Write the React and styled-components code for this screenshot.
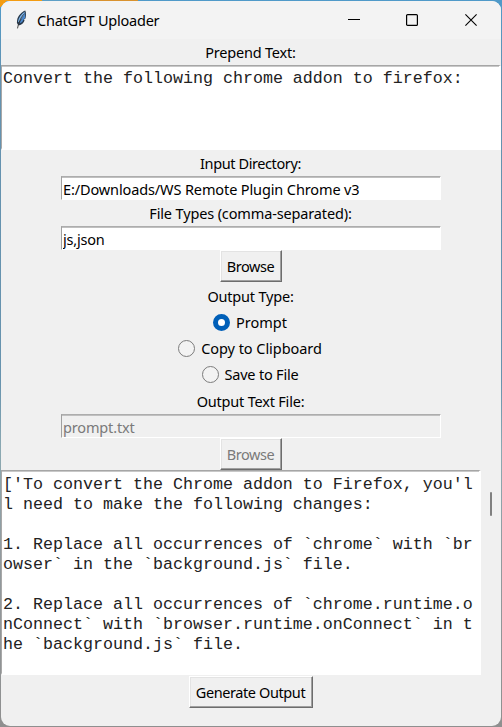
import React from "react";
import styled, { createGlobalStyle } from "styled-components";

const GlobalStyle = createGlobalStyle`
  * { box-sizing: border-box; }
  html, body { margin: 0; padding: 0; overflow: hidden; }
  button, input { font: inherit; margin: 0; }
`;

const Desktop = styled.div`
  width: 502px;
  height: 727px;
  padding: 1px;
  background:
    linear-gradient(90deg, #f39c12 0 42px, #5d9fc6 42px 90px, #d9922e 90px 138px, transparent 138px) 0 0 / 100% 1px no-repeat,
    linear-gradient(135deg, #f39c12 0 5px, transparent 5px) 0 0 / 8px 8px no-repeat,
    linear-gradient(180deg, #4f9ac9 0, #6492b0 80px, #6793ae 380px, #8ba9b2 450px, #929a9e 560px, #8f8f8f 727px);
`;

const Window = styled.main`
  display: flex;
  flex-direction: column;
  width: 500px;
  height: 725px;
  border-radius: 9px;
  overflow: hidden;
  background: #f0f0f0;
  color: #000;
  font: 14.5px/20px "Noto Sans", "Open Sans", sans-serif;
`;

const TitleBar = styled.header`
  display: flex;
  align-items: center;
  height: 38px;
  flex: none;
  padding: 0 1px 0 13px;
  background: #f3f3f3;
`;

const Title = styled.h1`
  flex: 1;
  margin: 0 0 0 7px;
  font-size: 14.5px;
  font-weight: 400;
  letter-spacing: ${(p) => p.$track}px;
  white-space: nowrap;
`;

const CaptionButton = styled.button`
  display: grid;
  place-items: center;
  width: 58.5px;
  height: 38px;
  padding: 0;
  border: 0;
  background: none;
`;

const Body = styled.div`
  display: flex;
  flex-direction: column;
  align-items: center;
`;

const Label = styled.label`
  display: flex;
  align-items: center;
  justify-content: center;
  height: ${(p) => p.$h || 26}px;
  margin-right: 1px;
  letter-spacing: ${(p) => p.$track || 0}px;
  white-space: nowrap;
`;

const TextPane = styled.div`
  width: ${(p) => p.$w}px;
  height: ${(p) => p.$h}px;
  padding: ${(p) => p.$top || 3}px 0 0 1px;
  border: 2px solid #fff;
  border-top: 1px solid #a6a6a6;
  border-left: 1px solid #a8a8a8;
  background: #fff;
  box-shadow: inset 0 1px #c8c8c8;
  font: 16.67px/20px "Liberation Mono", monospace;
  white-space: pre;
  color: #222;
`;

const Entry = styled.input`
  width: 380px;
  height: 24px;
  padding: 1px 2px 0 1px;
  border: 1px solid #fff;
  border-top-color: #adadad;
  border-left-color: #a0a0a0;
  border-radius: 0;
  outline: 0;
  background: #fff;
  box-shadow: inset 0 1px #c0c0c0;
  color: #000;
  letter-spacing: ${(p) => p.$track || 0}px;
  &:disabled { background: #f0f0f0; color: #7a7a7a; }
`;

const PushButton = styled.button`
  width: ${(p) => p.$w}px;
  height: 32px;
  margin-right: 1px;
  padding: 0;
  border: 1px solid #6d6d6d;
  border-top-color: #fff;
  border-left-color: #fff;
  border-radius: 0;
  background: #f0f0f0;
  box-shadow: inset -1px -1px #a0a0a0, inset 1px 1px #e3e3e3;
  color: #000;
  letter-spacing: ${(p) => p.$track || 0}px;
  white-space: nowrap;
  &:disabled { color: #7a7a7a; }
`;

const Option = styled.label`
  display: flex;
  align-items: center;
  gap: 6px;
  height: 26px;
  margin-right: 2px;
  letter-spacing: ${(p) => p.$track || 0}px;
  white-space: nowrap;
`;

const Dot = styled.span`
  width: 17px;
  height: 17px;
  border-radius: 50%;
  border: ${(p) => (p.$on ? "5px solid #005fb8" : "1px solid #7c7c7c")};
  background: ${(p) => (p.$on ? "#fff" : "#f3f3f3")};
`;

const OutputRow = styled.div`
  display: flex;
  width: 500px;
  height: 206px;
`;

const ScrollTrack = styled.div`
  display: flex;
  justify-content: center;
  width: 20px;
  padding-top: 22px;
`;

const ScrollThumb = styled.div`
  width: 2px;
  height: 24px;
  border-radius: 1px;
  background: #808080;
`;

const OUTPUT = `['To convert the Chrome addon to Firefox, you'l
l need to make the following changes:

1. Replace all occurrences of \`chrome\` with \`br
owser\` in the \`background.js\` file.

2. Replace all occurrences of \`chrome.runtime.o
nConnect\` with \`browser.runtime.onConnect\` in t
he \`background.js\` file.`;

function Feather() {
  return (
    <svg width="16" height="20" viewBox="0 0 16 20">
      <path d="M11.3.6C7.8 1.9 3.7 6.1 3.1 10.2l-.2 2.9 1.7 2.4c3.3-.6 5.7-3 6-5.4l-1-.3 1.9-1.3c.5-2.2.9-5.2-.2-7.9Z" fill="#26384b" />
      <path d="M10.9 1.5C7 4.2 4.6 7.4 4 11.6l.6.9L10 5.5Z" fill="#7eb5e9" />
      <path d="M11.2 2.8 5.2 13.4l3-1.4 1.3-2.4 1.5-1.4Z" fill="#4a88ce" />
      <path d="M9.7 4.3C6.4 8.5 4.7 12 3.5 18.4" fill="none" stroke="#333" strokeWidth=".9" />
    </svg>
  );
}

export default function App() {
  return (
    <Desktop>
      <GlobalStyle />
      <Window>
        <TitleBar>
          <Feather />
          <Title $track={-0.22}>ChatGPT Uploader</Title>
          <CaptionButton aria-label="Minimize">
            <svg width="12" height="12"><path d="M0 5.5h12" stroke="#000" /></svg>
          </CaptionButton>
          <CaptionButton aria-label="Maximize">
            <svg width="12" height="12"><rect x=".6" y=".6" width="10.8" height="10.8" rx="1" fill="none" stroke="#000" strokeWidth="1.2" /></svg>
          </CaptionButton>
          <CaptionButton aria-label="Close">
            <svg width="12" height="12"><path d="m.4.4 11.2 11.2M11.6.4.4 11.6" stroke="#000" strokeWidth="1.1" /></svg>
          </CaptionButton>
        </TitleBar>
        <Body>
          <Label $track={-0.2}>Prepend Text:</Label>
          <TextPane $w={500} $h={85}>Convert the following chrome addon to firefox:</TextPane>
          <Label $track={-0.4}>Input Directory:</Label>
          <Entry $track={-0.12} defaultValue="E:/Downloads/WS Remote Plugin Chrome v3" />
          <Label $track={-0.14}>File Types (comma-separated):</Label>
          <Entry $track={-0.2} defaultValue="js,json" />
          <PushButton $w={62} $track={-0.4}>Browse</PushButton>
          <Label $h={27} $track={-0.2}>Output Type:</Label>
          <Option><Dot $on />Prompt</Option>
          <Option $track={-0.05}><Dot />Copy to Clipboard</Option>
          <Option $track={-0.2}><Dot />Save to File</Option>
          <Label $h={27} $track={-0.2}>Output Text File:</Label>
          <Entry $track={-0.15} disabled defaultValue="prompt.txt" />
          <PushButton $w={62} $track={-0.4} disabled>Browse</PushButton>
          <OutputRow>
            <TextPane $w={480} $h={205} $top={4}>{OUTPUT}</TextPane>
            <ScrollTrack><ScrollThumb /></ScrollTrack>
          </OutputRow>
          <PushButton $w={124} $track={-0.4}>Generate Output</PushButton>
        </Body>
      </Window>
    </Desktop>
  );
}
